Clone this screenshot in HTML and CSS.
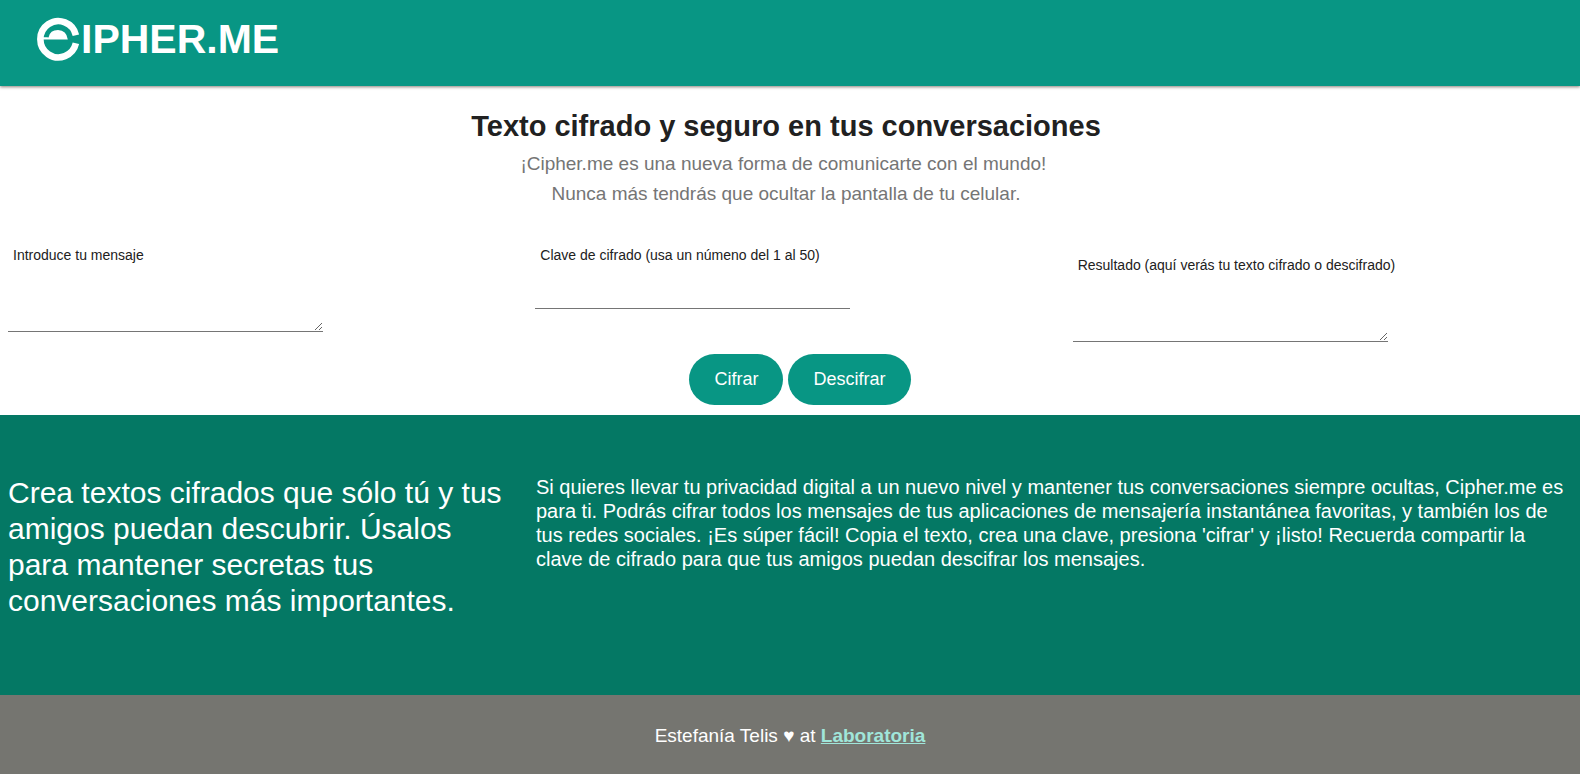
FILE: index.html
```html
<!DOCTYPE html>
<html lang="es">
<head>
<meta charset="utf-8">
<title>Cipher.me</title>
<link rel="stylesheet" href="styles.css">
</head>
<body>
<header class="header">
  <div class="logo">
    <svg class="logo-mark" viewBox="0 0 43 44" aria-hidden="true">
      <path d="M38.900 18.200A18 18.100 0 1 0 38.900 26.300" fill="none" stroke="#fff" stroke-width="6.600"/>
      <path d="M6 20.200H10L11.500 20.400Q13 13 21 13Q29.500 13.200 30.800 22.400H6Z" fill="#fff"/>
    </svg>
    <span class="logo-text">IPHER.ME</span>
  </div>
</header>
<main>
  <section class="intro">
    <h1 class="title">Texto cifrado y seguro en tus conversaciones</h1>
    <p class="subtitle">¡Cipher.me es una nueva forma de comunicarte con el mundo!&nbsp;<br>Nunca más tendrás que ocultar la pantalla de tu celular.</p>
  </section>
  <form class="cipher">
    <div class="fields">
      <div class="field">
        <label class="label" for="message">Introduce tu mensaje</label>
        <textarea class="control area" id="message"></textarea>
      </div>
      <div class="field">
        <label class="label" for="key">Clave de cifrado (usa un númeno del 1 al 50)</label>
        <input class="control" id="key" type="text" inputmode="numeric">
      </div>
      <div class="field result">
        <label class="label" for="result">Resultado (aquí verás tu texto cifrado o descifrado)</label>
        <textarea class="control area" id="result"></textarea>
      </div>
    </div>
    <div class="actions">
      <button class="button" type="button">Cifrar</button>
      <button class="button" type="button">Descifrar</button>
    </div>
  </form>
  <section class="about">
    <h2 class="lead">Crea textos cifrados que sólo tú y tus amigos puedan descubrir. Úsalos para mantener secretas tus conversaciones más importantes.</h2>
    <p class="detail">Si quieres llevar tu privacidad digital a un nuevo nivel y mantener tus conversaciones siempre ocultas, Cipher.me es para ti. Podrás cifrar todos los mensajes de tus aplicaciones de mensajería instantánea favoritas, y también los de tus redes sociales. ¡Es súper fácil! Copia el texto, crea una clave, presiona 'cifrar' y ¡listo! Recuerda compartir la clave de cifrado para que tus amigos puedan descifrar los mensajes.</p>
  </section>
</main>
<footer class="footer">
  <p class="credit">Estefanía Telis ♥ at <a class="link" href="#">Laboratoria</a></p>
</footer>
</body>
</html>
```
FILE: styles.css
```css
* {
  box-sizing: border-box;
}

body {
  margin: 0;
  min-height: 100vh;
  display: flex;
  flex-direction: column;
  background: #fff;
  color: #212121;
  font-family: "Liberation Sans", Arial, sans-serif;
}

h1,
h2,
p {
  margin: 0;
}

.header {
  padding: 17px 37px 25px;
  background: #089684;
  box-shadow: 0 1px 3px rgba(60, 40, 30, 0.6);
}

.logo {
  display: flex;
  align-items: center;
  gap: 1px;
  color: #fff;
}

.logo-mark {
  width: 43px;
  height: 44px;
}

.logo-text {
  font-size: 41px;
  font-weight: bold;
  line-height: 44px;
}

.intro {
  padding: 22px 8px 0 0;
  text-align: center;
}

.title {
  font-size: 29px;
  line-height: 36px;
}

.subtitle {
  padding-top: 5px;
  color: #757575;
  font-size: 19px;
  line-height: 30px;
}

.fields {
  display: grid;
  grid-template-columns: repeat(3, 1fr);
  gap: 10px;
  padding: 37px 0 0 8px;
}

.field {
  display: flex;
  flex-direction: column;
  align-items: flex-start;
}

.result {
  padding: 10px 0 0 10px;
}

.label {
  padding: 0 5px;
  font-size: 14px;
  line-height: 18px;
}

.control {
  width: 60%;
  min-width: 315px;
  height: 45px;
  padding: 0 5px;
  border: 0;
  border-bottom: 1px solid #757575;
  border-radius: 0;
  background: transparent;
  color: inherit;
  font: inherit;
  font-size: 19px;
  outline: 0;
}

.area {
  height: 68px;
  padding: 20px 5px 0;
  resize: both;
}

.actions {
  display: flex;
  justify-content: center;
  gap: 5px;
  padding: 12px 0 10px 20px;
}

.button {
  padding: 15px 25px;
  border: 0;
  border-radius: 26px;
  background: #089684;
  color: #fff;
  font-family: inherit;
  font-size: 18px;
  line-height: 21px;
}

.about {
  display: grid;
  grid-template-columns: 1fr 2fr;
  gap: 10px;
  padding: 60px 8px 76px;
  background: #047864;
  color: #fff;
}

.lead {
  padding-right: 16px;
  font-size: 30px;
  font-weight: normal;
  line-height: 36px;
}

.detail {
  font-size: 20px;
  line-height: 24px;
}

.footer {
  flex: 1;
  padding: 29px 0 27px;
  background: #757570;
  color: #fff;
  font-size: 19px;
  line-height: 23px;
  text-align: center;
}

.link {
  color: #a0e6da;
  font-weight: bold;
}
```
